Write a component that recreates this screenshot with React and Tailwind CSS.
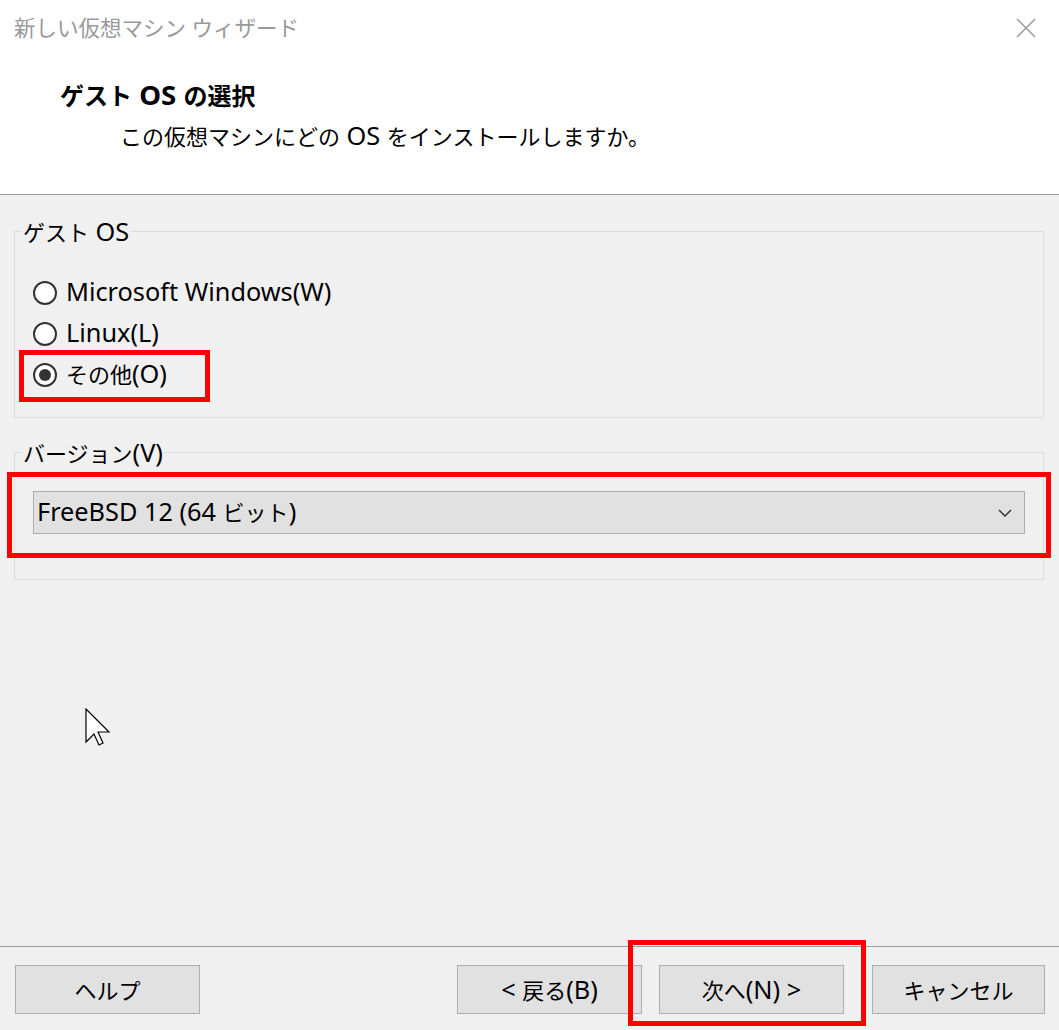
const font = { fontFamily: '"Noto Sans", "Noto Sans CJK JP", sans-serif' }

// Latin runs look larger than the kana in the original UI font, so bump them up a bit
function T({ s }) {
  return s.split(/([ -~]+)/).map((part, i) =>
    /^[ -~]+$/.test(part) ? (
      <span key={i} className="text-[1.15em]">{part}</span>
    ) : (
      part
    )
  )
}

function Radio({ label, checked }) {
  return (
    <label className="flex items-center h-[41px] gap-[9px]">
      <span className="w-[24px] h-[24px] rounded-full border-2 border-[#333] bg-white flex items-center justify-center">
        {checked && <span className="w-[12px] h-[12px] rounded-full bg-[#333]" />}
      </span>
      <span className="text-[22px] leading-[32px] text-black -mt-[2px]"><T s={label} /></span>
    </label>
  )
}

function Button({ children, className = '' }) {
  return (
    <button className={`h-[49px] bg-[#e1e1e1] border border-[#adadad] text-[22px] leading-[32px] text-black ${className}`}>
      <T s={children} />
    </button>
  )
}

export default function App() {
  return (
    <div className="w-[1059px] h-[1030px] bg-[#f0f0f0] flex flex-col relative overflow-hidden" style={font}>
      {/* Header */}
      <div className="h-[195px] bg-white border-b border-[#a0a0a0] flex flex-col">
        <div className="flex items-center justify-between h-[56px] pl-[14px] pr-[23px]">
          <span className="text-[21.5px] text-[#999]">新しい仮想マシン ウィザード</span>
          <svg width="20" height="20" viewBox="0 0 20 20" stroke="#999" strokeWidth="1.5">
            <path d="M1 1L19 19M19 1L1 19" />
          </svg>
        </div>
        <div className="pl-[60px] mt-[20px] text-[24px] font-bold text-black leading-[36px]"><T s="ゲスト OS の選択" /></div>
        <div className="pl-[120px] mt-[3px] text-[22px] text-black leading-[36px]"><T s="この仮想マシンにどの OS をインストールしますか。" /></div>
      </div>

      {/* Body */}
      <div className="flex-1 flex flex-col px-[14px] pr-[15px]">
        <fieldset className="mt-[20px] h-[203px] border border-[#dcdcdc] px-[18px]">
          <legend className="text-[22px] text-black px-[1px] -ml-[11px] leading-[32px]"><T s="ゲスト OS" /></legend>
          <div className="mt-[24px] flex flex-col">
            <Radio label="Microsoft Windows(W)" />
            <Radio label="Linux(L)" />
            <Radio label="その他(O)" checked />
          </div>
        </fieldset>

        <fieldset className="mt-[18px] h-[144px] border border-[#dcdcdc] px-[18px]">
          <legend className="text-[22px] text-black px-[1px] -ml-[11px] leading-[32px]"><T s="バージョン(V)" /></legend>
          <div className="mt-[22px] h-[43px] bg-[#e1e1e1] border border-[#adadad] flex items-center justify-between pl-[3px] pr-[12px]">
            <span className="text-[22px] leading-[32px] text-black -mt-[2px]"><T s="FreeBSD 12 (64 ビット)" /></span>
            <svg width="14" height="8" viewBox="0 0 14 8" fill="none" stroke="#333" strokeWidth="1.5">
              <path d="M1 1L7 7L13 1" />
            </svg>
          </div>
        </fieldset>

        <div className="flex-1 pl-[71px] pt-[128px]">
          <svg width="26" height="40" viewBox="0 0 26 40">
            <path d="M1 1V34L9 26L14 37L18 35L13 24H24Z" fill="white" stroke="black" strokeWidth="1.2" strokeLinejoin="miter" />
          </svg>
        </div>
      </div>

      {/* Footer */}
      <div className="h-[84px] border-t border-[#a0a0a0] flex items-start pt-[18px] pl-[15px] pr-[14px]">
        <Button className="w-[185px]">ヘルプ</Button>
        <div className="flex-1" />
        <Button className="w-[185px]">{'< 戻る(B)'}</Button>
        <Button className="w-[185px] ml-[17px]">{'次へ(N) >'}</Button>
        <Button className="w-[173px] ml-[28px]">キャンセル</Button>
      </div>

      {/* Annotation boxes */}
      <div className="absolute left-[19px] top-[350px] w-[191px] h-[52px] border-[5px] border-[#ff0000]" />
      <div className="absolute left-[7px] top-[472px] w-[1044px] h-[86px] border-[5px] border-[#ff0000]" />
      <div className="absolute left-[628px] top-[940px] w-[238px] h-[86px] border-[5px] border-[#ff0000]" />
    </div>
  )
}
